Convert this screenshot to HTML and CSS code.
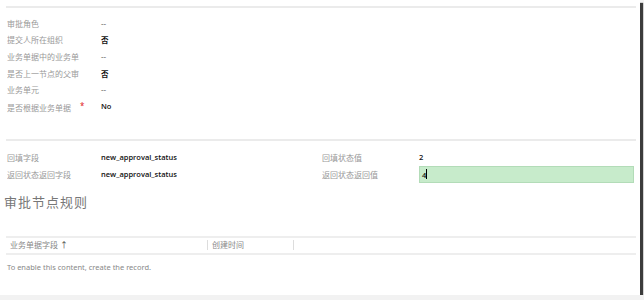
FILE: index.html
```html
<!DOCTYPE html>
<html lang="zh-CN">
<head>
  <meta charset="UTF-8" />
  <title>审批节点</title>
  <link rel="stylesheet" href="styles.css">
</head>
<body>
  <div class="frame">
    <div class="rule"></div>

    <div class="fields">
      <div class="row"><span class="label">审批角色</span><span class="value empty">--</span></div>
      <div class="row"><span class="label">提交人所在组织</span><span class="value strong">否</span></div>
      <div class="row"><span class="label">业务单据中的业务单</span><span class="value empty">--</span></div>
      <div class="row"><span class="label">是否上一节点的父审</span><span class="value strong">否</span></div>
      <div class="row"><span class="label">业务单元</span><span class="value empty">--</span></div>
      <div class="row"><span class="label">是否根据业务单据<i class="req">*</i></span><span class="value strong">No</span></div>
    </div>

    <div class="rule rule-mid"></div>

    <div class="pair">
      <div class="col">
        <div class="row row-wide"><span class="label">回填字段</span><span class="value strong">new_approval_status</span></div>
        <div class="row row-wide"><span class="label">返回状态返回字段</span><span class="value strong">new_approval_status</span></div>
      </div>
      <div class="col col-right">
        <div class="row row-wide"><span class="label">回填状态值</span><span class="value strong">2</span></div>
        <div class="row row-wide"><span class="label">返回状态返回值</span><span class="value strong edit">4<span class="caret"></span></span></div>
      </div>
    </div>

    <h3 class="section-title">审批节点规则</h3>

    <div class="grid">
      <div class="grid-head">
        <span class="th th-first">业务单据字段 <span class="sort">&#x2191;</span></span>
        <span class="th th-second">创建时间</span>
        <span class="th th-last"></span>
      </div>
      <div class="grid-empty">To enable this content, create the record.</div>
    </div>
  </div>
</body>
</html>
```

FILE: styles.css
```css
body {
  margin: 0;
  background-color: #f2f2f2;
  font-family: "Noto Sans", "Noto Sans CJK SC", sans-serif;
}

.frame {
  width: 640px;
  height: 295px;
  background-color: #fff;
  box-shadow: 3px 3px 1px #3c3c3c;
  box-sizing: border-box;
  padding: 6px 4px 0 6px;
}

.rule {
  height: 2px;
  background-color: #ebebeb;
  width: 630px;
}

.fields {
  padding-top: 7px;
  padding-left: 1px;
}

.row {
  display: flex;
  align-items: center;
  height: 16.6px;
  font-size: 8px;
}

.label {
  width: 94px;
  color: #999;
  white-space: nowrap;
  overflow: hidden;
  position: relative;
}

.value {
  color: #333;
}

.value.strong {
  color: #111;
  font-weight: 600;
  font-size: 7.5px;
  font-family: "Open Sans", "Noto Sans CJK SC", sans-serif;
}

.value.empty {
  color: #777;
}

.req {
  color: #e02020;
  font-style: normal;
  margin-left: 9px;
  vertical-align: 2px;
}

.rule-mid {
  margin-top: 24px;
}

.pair {
  display: flex;
  padding-top: 8px;
  padding-left: 1px;
}

.col {
  width: 315px;
}

.col-right {
  flex: 1;
}

.row-wide {
  height: 17px;
}

.col-right .label {
  width: 97px;
}

.value.edit {
  flex: 1;
  height: 17px;
  line-height: 17px;
  background-color: #c7ebcb;
  border: 1px solid #b3dcb8;
  box-sizing: border-box;
  padding-left: 2px;
  margin-right: 2px;
}

.caret {
  display: inline-block;
  width: 1px;
  height: 10px;
  background-color: #000;
  vertical-align: -1px;
}

.section-title {
  margin: 9px 0 0 -2px;
  font-size: 13px;
  font-weight: normal;
  color: #777;
  letter-spacing: 1px;
  font-family: "Noto Sans CJK SC", sans-serif;
}

.grid {
  margin-top: 25px;
  width: 630px;
}

.grid-head {
  display: flex;
  align-items: center;
  height: 15px;
  border-top: 2px solid #eeeeee;
  border-bottom: 2px solid #eeeeee;
  font-size: 8px;
  color: #888;
}

.th {
  padding: 0 4px;
  line-height: 10px;
}

.th-first {
  width: 193px;
}

.th-second {
  width: 77px;
  border-left: 1px solid #ddd;
  border-right: 1px solid #ddd;
}

.sort {
  color: #444;
  font-size: 8px;
}

.grid-empty {
  font-size: 7.5px;
  color: #888;
  padding: 7px 0 0 1px;
}
```
